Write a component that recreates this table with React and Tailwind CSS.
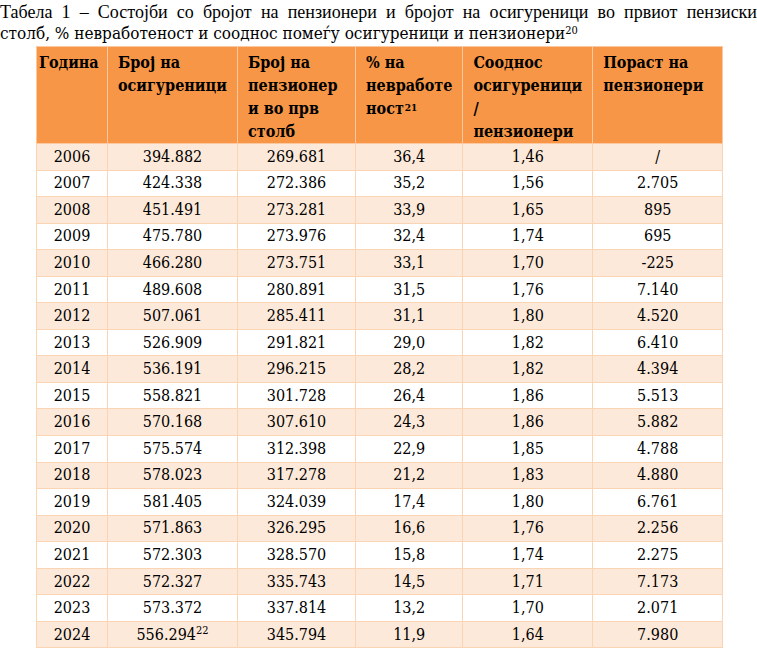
import React from 'react';

const rows = [
  ['2006', '394.882', '269.681', '36,4', '1,46', '/'],
  ['2007', '424.338', '272.386', '35,2', '1,56', '2.705'],
  ['2008', '451.491', '273.281', '33,9', '1,65', '895'],
  ['2009', '475.780', '273.976', '32,4', '1,74', '695'],
  ['2010', '466.280', '273.751', '33,1', '1,70', '-225'],
  ['2011', '489.608', '280.891', '31,5', '1,76', '7.140'],
  ['2012', '507.061', '285.411', '31,1', '1,80', '4.520'],
  ['2013', '526.909', '291.821', '29,0', '1,82', '6.410'],
  ['2014', '536.191', '296.215', '28,2', '1,82', '4.394'],
  ['2015', '558.821', '301.728', '26,4', '1,86', '5.513'],
  ['2016', '570.168', '307.610', '24,3', '1,86', '5.882'],
  ['2017', '575.574', '312.398', '22,9', '1,85', '4.788'],
  ['2018', '578.023', '317.278', '21,2', '1,83', '4.880'],
  ['2019', '581.405', '324.039', '17,4', '1,80', '6.761'],
  ['2020', '571.863', '326.295', '16,6', '1,76', '2.256'],
  ['2021', '572.303', '328.570', '15,8', '1,74', '2.275'],
  ['2022', '572.327', '335.743', '14,5', '1,71', '7.173'],
  ['2023', '573.372', '337.814', '13,2', '1,70', '2.071'],
  ['2024', '556.294', '345.794', '11,9', '1,64', '7.980'],
];

const widths = ['w-[71px]', 'w-[130px]', 'w-[118px]', 'w-[107px]', 'w-[129px]', 'w-[130px]'];

const tableFont = "font-['DejaVu_Serif_Condensed','DejaVu_Serif',serif]";
const th = 'text-left font-bold pl-[10px] pr-[10px] pt-[4px] border border-[#fbc89f]';

const App = () => {
  return (
    <div className="w-[757px] h-[650px] bg-white text-black overflow-hidden">
      <div className="pt-[2px]">
        <p className="font-['Liberation_Serif',serif] text-[18px] leading-[20px] text-justify [text-align-last:justify] whitespace-nowrap">
          Табела 1 – Состојби со бројот на пензионери и бројот на осигуреници во првиот пензиски
        </p>
        <p className={`${tableFont} text-[17px] leading-[22px]`}>
          столб, % невработеност и сооднос помеѓу осигуреници и пензионери<sup className="text-[11px]">20</sup>
        </p>
      </div>

      <table className={`ml-[36px] mt-[2px] border-collapse table-fixed ${tableFont} text-[16px]`}>
        <colgroup>
          {widths.map((w, i) => <col key={i} className={w} />)}
        </colgroup>
        <thead>
          <tr className="bg-[#f79646] h-[94px] align-top leading-[23px]">
            <th className="text-left font-bold pl-[2px] pt-[4px] border border-[#fbc89f]">Година</th>
            <th className={th}>Број на осигуреници</th>
            <th className={th}>Број на пензионер и во прв столб</th>
            <th className={th}>
              % на невработе ност<sup className="text-[10px] ml-[1px] top-[-0.3em]">21</sup>
            </th>
            <th className={th}>Сооднос осигуреници / пензионери</th>
            <th className={th}>Пораст на пензионери</th>
          </tr>
        </thead>
        <tbody>
          {rows.map((r, i) => (
            <tr key={r[0]} className={`h-[26.55px] ${i % 2 === 0 ? 'bg-[#fde9d9]' : 'bg-white'}`}>
              {r.map((c, j) => (
                <td key={j} className="text-center leading-[20px] p-0 border border-[#fbd4b4]">
                  {c}
                  {r[0] === '2024' && j === 1 && <sup className="text-[11px]">22</sup>}
                </td>
              ))}
            </tr>
          ))}
        </tbody>
      </table>
    </div>
  );
};

export default App;
